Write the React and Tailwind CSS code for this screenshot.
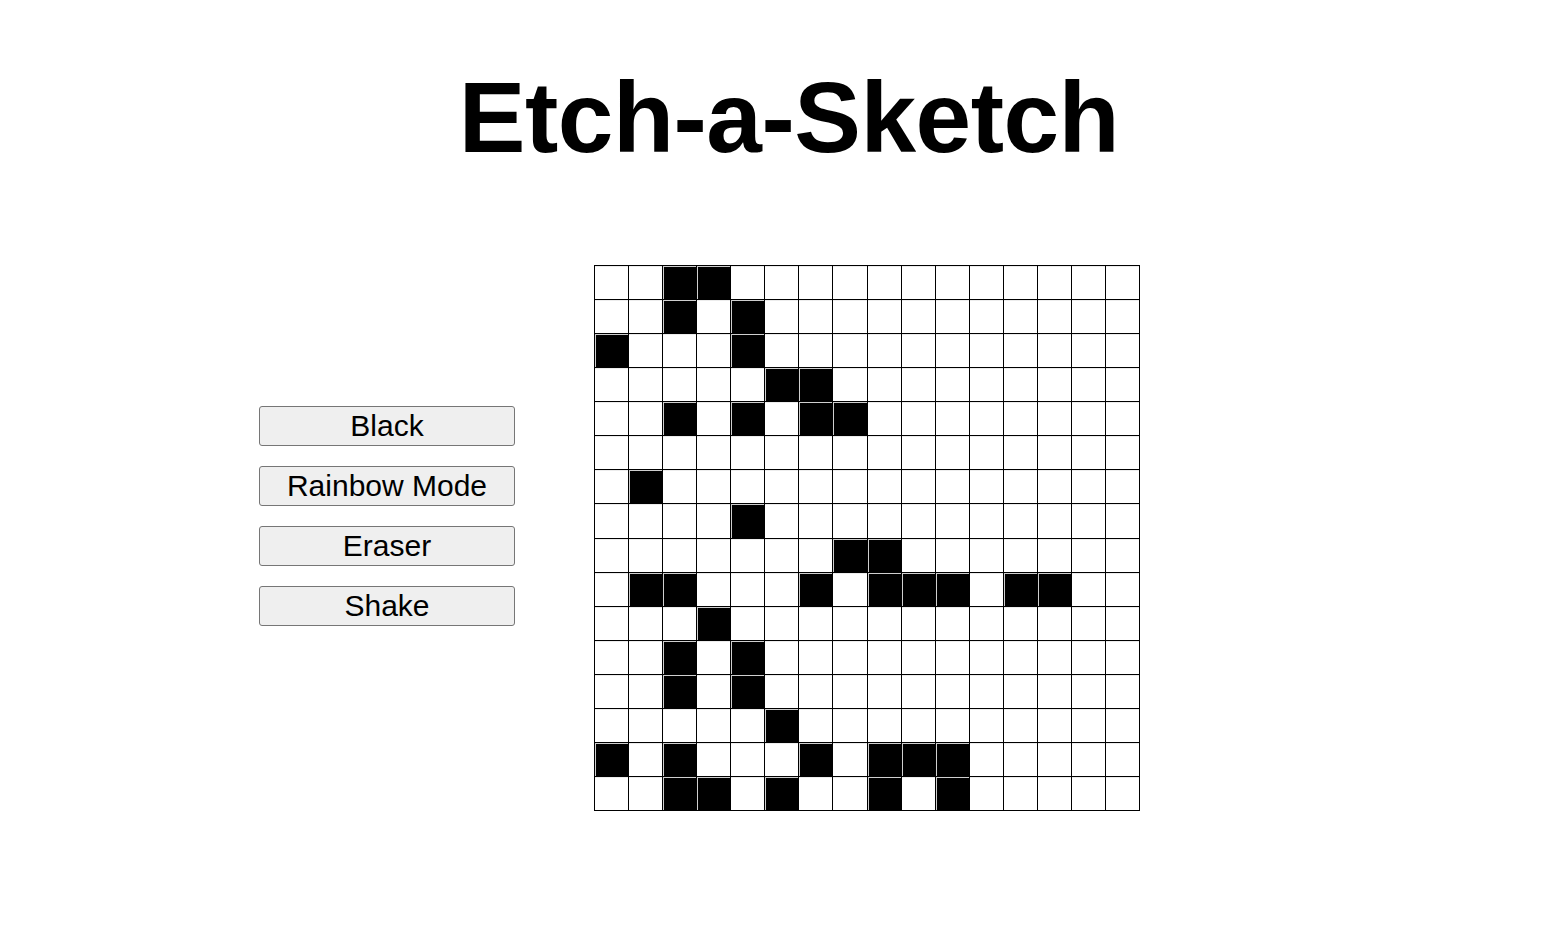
import React from "react";

const BLACK = {
  0: [2, 3],
  1: [2, 4],
  2: [0, 4],
  3: [5, 6],
  4: [2, 4, 6, 7],
  5: [],
  6: [1],
  7: [4],
  8: [7, 8],
  9: [1, 2, 6, 8, 9, 10, 12, 13],
  10: [3],
  11: [2, 4],
  12: [2, 4],
  13: [5],
  14: [0, 2, 6, 8, 9, 10],
  15: [2, 3, 5, 8, 10],
};

export default function App() {
  const cells = [];
  for (let r = 0; r < 16; r++) {
    for (let c = 0; c < 16; c++) {
      const on = BLACK[r].includes(c);
      cells.push(
        <div
          key={`${r}-${c}`}
          className={
            on
              ? "bg-black shadow-[inset_1px_1px_0_#cfcfcf]"
              : "bg-white shadow-[inset_0_1px_0_#ececec]"
          }
        />
      );
    }
  }
  const buttons = ["Black", "Rainbow Mode", "Eraser", "Shake"];
  return (
    <div
      className="w-[1562px] h-[932px] bg-white text-black overflow-hidden"
      style={{ fontFamily: '"Liberation Sans", Arial, Helvetica, sans-serif' }}
    >
      <h1 className="mt-[60px] pl-[16px] text-center text-[100px] leading-[115px] font-bold tracking-[-0.5px]">
        Etch-a-Sketch
      </h1>
      <div className="flex items-start mt-[90px] pl-[259px]">
        <div className="flex flex-col gap-[20px] w-[256px] mt-[141px]">
          {buttons.map((b) => (
            <button
              key={b}
              className="h-[40px] w-[256px] bg-[#efefef] border border-[#767676] rounded-[3px] text-[30px] leading-none flex items-center justify-center"
            >
              {b}
            </button>
          ))}
        </div>
        <div className="ml-[79px] w-[546px] h-[546px] border border-black bg-black grid grid-cols-16 grid-rows-16 gap-px">
          {cells}
        </div>
      </div>
    </div>
  );
}
